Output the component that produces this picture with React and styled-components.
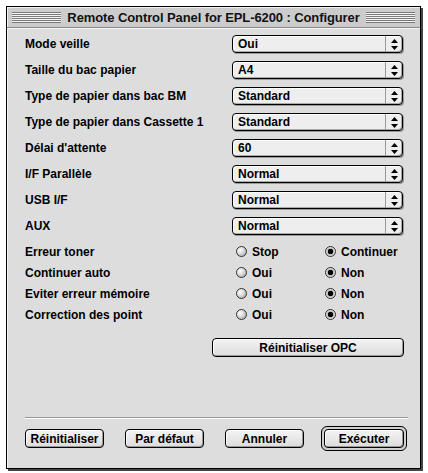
import React from "react"
import styled, { createGlobalStyle } from "styled-components"

const GlobalStyle = createGlobalStyle`
  html, body {
    margin: 0;
    padding: 0;
    background: #ffffff;
  }
  body {
    font-family: "Liberation Sans", Arial, sans-serif;
  }
`

const selects = [
  { label: "Mode veille", value: "Oui" },
  { label: "Taille du bac papier", value: "A4" },
  { label: "Type de papier dans bac BM", value: "Standard" },
  { label: "Type de papier dans Cassette 1", value: "Standard" },
  { label: "Délai d'attente", value: "60" },
  { label: "I/F Parallèle", value: "Normal" },
  { label: "USB I/F", value: "Normal" },
  { label: "AUX", value: "Normal" },
]

const radios = [
  { label: "Erreur toner", a: "Stop", b: "Continuer" },
  { label: "Continuer auto", a: "Oui", b: "Non" },
  { label: "Eviter erreur mémoire", a: "Oui", b: "Non" },
  { label: "Correction des point", a: "Oui", b: "Non" },
]

const App = () => {
  return (
    <>
      <GlobalStyle />
      <Page>
        <Window>
          <TitleBar>
            <Stripes />
            <Title>Remote Control Panel for EPL-6200 : Configurer</Title>
            <Stripes />
          </TitleBar>
          <Content>
            {selects.map(s => (
              <SelectRow key={s.label}>
                <Label>{s.label}</Label>
                <Popup>
                  <PopupText>{s.value}</PopupText>
                  <PopupArrows>
                    <svg width="7" height="11" viewBox="0 0 7 11">
                      <path d="M3.5 0 L7 4 L0 4 Z" fill="#000" />
                      <path d="M0 7 L7 7 L3.5 11 Z" fill="#000" />
                    </svg>
                  </PopupArrows>
                </Popup>
              </SelectRow>
            ))}
            <RadioBlock>
              {radios.map(r => (
                <RadioRow key={r.label}>
                  <Label>{r.label}</Label>
                  <RadioOption>
                    <RadioDot />
                    {r.a}
                  </RadioOption>
                  <RadioOption>
                    <RadioDot checked />
                    {r.b}
                  </RadioOption>
                </RadioRow>
              ))}
            </RadioBlock>
            <OpcRow>
              <WideButton>Réinitialiser OPC</WideButton>
            </OpcRow>
            <Spacer />
            <Separator />
            <ButtonBar>
              <Button>Réinitialiser</Button>
              <Button>Par défaut</Button>
              <Button>Annuler</Button>
              <DefaultRing>
                <Button>Exécuter</Button>
              </DefaultRing>
            </ButtonBar>
          </Content>
        </Window>
      </Page>
    </>
  )
}

const Page = styled.div`
  width: 428px;
  height: 473px;
  padding: 6px 0 0 6px;
  box-sizing: border-box;
`

const Window = styled.div`
  width: 415px;
  height: 463px;
  box-sizing: border-box;
  border: 1px solid #000;
  background: #dddddd;
  box-shadow: 2px 2px 0 #444;
  display: flex;
  flex-direction: column;
`

const TitleBar = styled.div`
  height: 20px;
  flex: none;
  display: flex;
  align-items: center;
  gap: 6px;
  padding: 0 5px;
  background: #cccccc;
  border-bottom: 1px solid #888;
  box-shadow: inset 1px 1px 0 #f4f4f4;
`

const Stripes = styled.div`
  flex: 1;
  height: 11px;
  background: repeating-linear-gradient(
    to bottom,
    #7a7a7a 0px,
    #7a7a7a 1px,
    #f4f4f4 1px,
    #f4f4f4 2px
  );
`

const Title = styled.div`
  flex: none;
  font-weight: bold;
  font-size: 13px;
  color: #111;
  letter-spacing: -0.1px;
`

const Content = styled.div`
  flex: 1;
  display: flex;
  flex-direction: column;
  padding: 7px 13px 17px 18px;
  box-shadow: inset 1px 1px 0 #f6f6f6;
`

const Label = styled.div`
  font-weight: bold;
  font-size: 12px;
  color: #000;
  white-space: nowrap;
`

const SelectRow = styled.div`
  display: grid;
  grid-template-columns: 207px 171px;
  align-items: center;
  height: 18px;
  margin-bottom: 8px;
`

const Popup = styled.div`
  height: 18px;
  box-sizing: border-box;
  border: 1px solid #000;
  border-radius: 4px;
  background: #eeeeee;
  box-shadow: inset 1px 1px 0 #ffffff, inset -1px -1px 0 #aaaaaa, 1px 1px 0 #999;
  display: flex;
  align-items: stretch;
`

const PopupText = styled.div`
  flex: 1;
  font-weight: bold;
  font-size: 12px;
  padding-left: 5px;
  display: flex;
  align-items: center;
`

const PopupArrows = styled.div`
  width: 16px;
  border-left: 1px solid #999;
  display: flex;
  align-items: center;
  justify-content: center;
`

const RadioBlock = styled.div`
  margin-top: -2px;
`

const RadioRow = styled.div`
  display: grid;
  grid-template-columns: 211px 89px auto;
  align-items: center;
  height: 21px;
`

const RadioOption = styled.div`
  display: flex;
  align-items: center;
  gap: 5px;
  font-weight: bold;
  font-size: 12px;
`

const RadioDot = styled.span`
  width: 11px;
  height: 11px;
  box-sizing: border-box;
  border-radius: 50%;
  border: 1px solid #333;
  background: ${p =>
    p.checked
      ? "radial-gradient(circle, #000 0 2.5px, #bbb 3px, #eee 5px)"
      : "radial-gradient(circle at 35% 35%, #ffffff 0, #dddddd 40%, #999 100%)"};
  flex: none;
`

const OpcRow = styled.div`
  display: flex;
  padding-left: 187px;
  margin-top: 13px;
`

const ButtonBase = styled.button`
  font-family: "Liberation Sans", Arial, sans-serif;
  font-weight: bold;
  font-size: 12px;
  color: #000;
  height: 19px;
  padding: 0;
  border: 1px solid #000;
  border-radius: 4px;
  background: linear-gradient(#f4f4f4, #dcdcdc);
  box-shadow: inset 1px 1px 0 #fff, inset -1px -1px 0 #999;
  cursor: default;
`

const WideButton = styled(ButtonBase)`
  width: 192px;
`

const Button = styled(ButtonBase)`
  width: 80px;
`

const Spacer = styled.div`
  flex: 1;
`

const Separator = styled.div`
  height: 1px;
  background: #999;
  border-bottom: 1px solid #fff;
  margin: 0 0 7px 0;
  width: 383px;
`

const ButtonBar = styled.div`
  display: flex;
  align-items: center;
  gap: 21px;
`

const DefaultRing = styled.div`
  padding: 2px;
  border: 1px solid #000;
  border-radius: 6px;
  background: #cfcfcf;
  margin-left: -4px;
  display: flex;
`

export default App
